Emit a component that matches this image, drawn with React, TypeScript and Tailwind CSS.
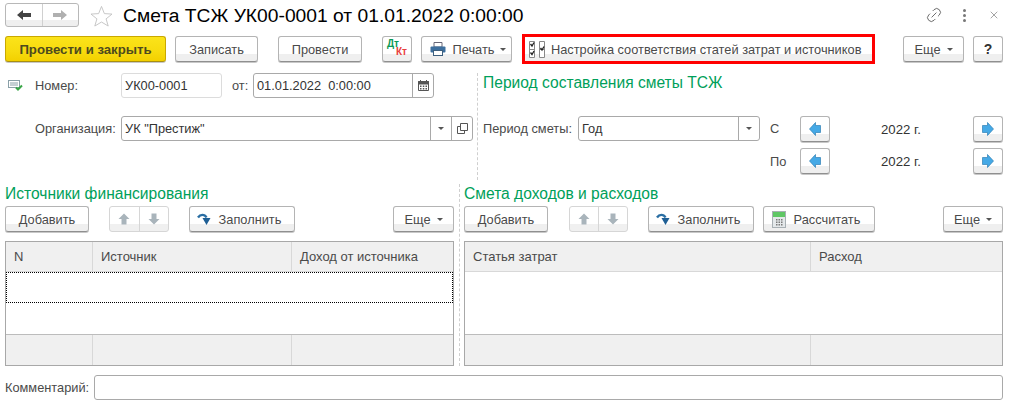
import type { ReactNode } from "react"
import { Link2, X } from "lucide-react"

function Btn({ className = "", children }: { className?: string; children?: ReactNode }) {
  return (
    <div className={`flex h-[26px] shrink-0 items-center justify-center rounded-[3px] border border-[#b4b4b4] border-b-[#8f8f8f] bg-[linear-gradient(#fff_0,#fff_17px,#efefef_17px)] shadow-[0_1px_0_#c8c8c8] ${className}`}>
      {children}
    </div>
  )
}

function T({ className = "", children }: { className?: string; children?: ReactNode }) {
  return <span className={`pt-[2px] ${className}`}>{children}</span>
}

function Caret() {
  return <span className="ml-[6px] mt-[1px] h-0 w-0 border-x-[3px] border-t-[3px] border-x-transparent border-t-[#555]" />
}

function ArrowV({ up, color = "#a9b4bb" }: { up?: boolean; color?: string }) {
  return (
    <svg width="12" height="12" viewBox="0 0 12 12" className={up ? "" : "rotate-180"}>
      <path d="M6 0.5 L11.5 6 H8.5 V11.5 H3.5 V6 H0.5 Z" fill={color} />
    </svg>
  )
}

function UpDown({ className = "" }: { className?: string }) {
  return (
    <div className={`flex h-[26px] shrink-0 rounded-[3px] border border-[#d6d6d6] bg-[linear-gradient(#fff_0,#fff_17px,#f0f0f0_17px)] ${className}`}>
      <div className="flex flex-1 items-center justify-center border-r border-[#d6d6d6] pb-[1px]"><ArrowV up /></div>
      <div className="flex flex-1 items-center justify-center pb-[1px]"><ArrowV /></div>
    </div>
  )
}

function FillIcon() {
  return (
    <svg width="14" height="13" viewBox="0 0 14 13" className="mr-[8px]">
      <path d="M1 4.5 C3.5 1 7.5 1 9.5 4.5" fill="none" stroke="#2a6ea3" strokeWidth="2.4" />
      <path d="M5.5 5 H13.5 L9.5 12 Z" fill="#1f5f95" />
    </svg>
  )
}

function CalcIcon() {
  return (
    <svg width="14" height="17" viewBox="0 0 14 17" className="mr-[8px]">
      <rect x="0.5" y="0.5" width="13" height="16" fill="#e4e8ea" stroke="#a8b0b4" />
      <rect x="1" y="1" width="12" height="5" fill="#5fc765" />
      <path d="M4 8h1.5v1.5H4zM6.5 8H8v1.5H6.5zM9 8h1.5v1.5H9zM4 10.5h1.5V12H4zM6.5 10.5H8V12H6.5zM9 10.5h1.5V12H9zM4 13h1.5v1.5H4zM6.5 13H8v1.5H6.5zM9 13h1.5v1.5H9z" fill="#7a7a7a" />
    </svg>
  )
}

function BlueArrow({ right }: { right?: boolean }) {
  return (
    <svg width="12" height="14" viewBox="0 0 12 14" className={right ? "" : "rotate-180"}>
      <path d="M0.5 3.5 H5.5 V0.5 L11.5 7 L5.5 13.5 V10.5 H0.5 Z" fill="#45a9e6" stroke="#2f7fb5" strokeWidth="0.7" />
    </svg>
  )
}

function Input({ className = "", children }: { className?: string; children?: ReactNode }) {
  return (
    <div className={`flex h-[25px] shrink-0 items-center rounded-[3px] border border-[#a9a9a9] bg-white text-[#333] ${className}`}>
      {children}
    </div>
  )
}

function InputCell({ children }: { children?: ReactNode }) {
  return <div className="flex h-full w-[21px] shrink-0 items-center justify-center border-l border-[#a9a9a9]">{children}</div>
}

function Heading({ children }: { children: ReactNode }) {
  return <div className="text-[15.6px] leading-[20px] text-[#00a05a]">{children}</div>
}

function Grid({ cols, focus }: { cols: { label: string; w: string }[]; focus?: boolean }) {
  return (
    <div className="mt-[9px] flex h-[125px] flex-col border border-[#a8a8a8]">
      <div className="flex h-[30px] shrink-0 border-b border-[#d8d8d8] bg-[#f0f0f0] text-[13px]">
        {cols.map((c) => (
          <div key={c.label} className={`flex items-center border-r border-[#d8d8d8] pl-[8px] last:border-r-0 ${c.w}`}>{c.label}</div>
        ))}
      </div>
      <div className="flex-1 bg-white">
        {focus && <div className="h-[31px] border border-dotted border-black" />}
      </div>
      <div className="flex h-[31px] shrink-0 border-t border-[#bcbcbc] bg-[#f0f0f0]">
        {cols.map((c) => (
          <div key={c.label} className={`border-r border-[#d8d8d8] last:border-r-0 ${c.w}`} />
        ))}
      </div>
    </div>
  )
}

export default function App() {
  return (
    <div className="flex h-[407px] w-[1014px] flex-col overflow-hidden bg-white font-['Liberation_Sans',Arial,sans-serif] text-[12.8px] leading-none text-[#4a4a4a]">
      {/* заголовок */}
      <div className="flex h-[34px] shrink-0 items-start pl-[5px] pt-[3px]">
        <div className="flex h-[24px] w-[74px] rounded-[3px] border border-[#b8b8b8] bg-[linear-gradient(#fff_0,#fff_16px,#efefef_16px)]">
          <div className="flex flex-1 items-center justify-center border-r border-[#d0d0d0]">
            <svg width="14" height="10" viewBox="0 0 14 10"><path d="M0 5 L6 0 V3 H14 V7 H6 V10 Z" fill="#444" /></svg>
          </div>
          <div className="flex flex-1 items-center justify-center">
            <svg width="14" height="10" viewBox="0 0 14 10"><path d="M14 5 L8 0 V3 H0 V7 H8 V10 Z" fill="#b0b0b0" /></svg>
          </div>
        </div>
        <svg width="23" height="22" viewBox="0 0 24 23" className="ml-[11px] mt-[2px]">
          <path d="M12 1.5 L15 9 L23 9.5 L16.8 14.5 L19 22 L12 17.8 L5 22 L7.2 14.5 L1 9.5 L9 9 Z" fill="#fff" stroke="#c4c4c4" />
        </svg>
        <div className="ml-[10px] mt-[3px] text-[19.25px] leading-[20px] text-black">Смета ТСЖ УК00-0001 от 01.01.2022 0:00:00</div>
        <div className="ml-auto flex items-center pr-[14px] pt-[3px]">
          <Link2 size={18} strokeWidth={1.2} className="-rotate-45 text-[#666]" />
          <div className="ml-[20px] flex flex-col gap-[2px]">
            <span className="h-[3px] w-[3px] rounded-full bg-[#777]" />
            <span className="h-[3px] w-[3px] rounded-full bg-[#777]" />
            <span className="h-[3px] w-[3px] rounded-full bg-[#777]" />
          </div>
          <X size={12} strokeWidth={1.2} className="ml-[22px] text-[#666]" />
        </div>
      </div>

      {/* панель команд */}
      <div className="flex h-[30px] shrink-0 items-center pl-[5px]">
        <div className="flex h-[26px] w-[161px] shrink-0 items-center justify-center rounded-[3px] border border-[#c9a800] border-b-[#a98f10] bg-[linear-gradient(#fbe31a_0,#f7db0e_60%,#f3d000_100%)] shadow-[0_1px_0_#c8c8c8]">
          <T className="text-[13.2px] font-bold text-[#4d4a1e]">Провести и закрыть</T>
        </div>
        <Btn className="ml-[9px] w-[83px]"><T>Записать</T></Btn>
        <Btn className="ml-[20px] w-[84px]"><T>Провести</T></Btn>
        <Btn className="ml-[20px] w-[30px]">
          <div className="flex w-[20px] flex-col pb-[2px] text-[10px] leading-[8px]">
            <span className="font-bold text-[#0a9a55]">Дт</span>
            <span className="self-end font-bold text-[#e8413c]">Кт</span>
          </div>
        </Btn>
        <Btn className="ml-[9px] w-[91px] pl-[3px]">
          <svg width="16" height="14" viewBox="0 0 16 14" className="mr-[7px]">
            <path d="M4 0.5 H12 V5 H4 Z" fill="#fff" stroke="#667" />
            <rect x="0.5" y="4.5" width="15" height="6" rx="1" fill="#3d6f9e" />
            <rect x="3.5" y="8.5" width="9" height="5" fill="#fff" stroke="#3d5f7e" />
          </svg>
          <T>Печать</T><Caret />
        </Btn>
        <div className="ml-[10px] flex h-[30px] w-[353px] shrink-0 items-center border-[3px] border-[#f00] bg-[linear-gradient(#fff_0,#fff_17px,#efefef_17px)] pl-[4px]">
          <svg width="16" height="17" viewBox="0 0 16 17" className="mr-[6px]">
            <path d="M0.5 0.5H5.5V16.5H0.5ZM0.5 8.5H5.5M10.5 0.5H15.5V16.5H10.5ZM10.5 8.5H15.5" fill="#fff" stroke="#888" />
            <path d="M1.5 3 L3 5 L5 1.5M1.5 11.5 L3 13.5 L5 10M11.5 7 L13 9 L15 5.5" fill="none" stroke="#222" strokeWidth="1.3" />
          </svg>
          <T>Настройка соответствия статей затрат и источников</T>
        </div>
        <Btn className="ml-[28px] w-[61px]"><T>Еще</T><Caret /></Btn>
        <Btn className="ml-[9px] w-[30px] text-[14px] font-bold text-[#333]">?</Btn>
      </div>

      {/* реквизиты */}
      <div className="mt-[9px] flex h-[107px] shrink-0">
        <div className="w-[478px] shrink-0 border-r border-dashed border-[#cfcfcf] pl-[8px] pr-[4px]">
          <div className="flex h-[25px] items-center">
            <svg width="15" height="11" viewBox="0 0 15 11" className="mr-[12px]">
              <rect x="0.5" y="0.5" width="11" height="7" fill="#fff" stroke="#8aa0a8" />
              <path d="M2 3H10M2 5H10" stroke="#8aa0a8" />
              <path d="M8 7.5 L10 9.5 L14 5.5" fill="none" stroke="#3aa648" strokeWidth="2" />
            </svg>
            <T className="w-[86px]">Номер:</T>
            <Input className="w-[101px] border-[#dcdcdc] pl-[3px]"><T>УК00-0001</T></Input>
            <T className="ml-[10px] w-[21px]">от:</T>
            <Input className="w-[181px] pl-[3px]">
              <T className="flex-1 whitespace-pre">01.01.2022  0:00:00</T>
              <InputCell>
                <svg width="11" height="11" viewBox="0 0 11 11"><path d="M0.5 1.5H10.5V10.5H0.5Z" fill="#fff" stroke="#555" /><path d="M0.5 1.5H10.5V4H0.5ZM2.5 0V2M8.5 0V2" fill="#555" stroke="#555" /><path d="M2 5.5h1.5V7H2zM4.8 5.5h1.5V7H4.8zM7.5 5.5H9V7H7.5zM2 8h1.5v1.5H2zM4.8 8h1.5v1.5H4.8zM7.5 8H9v1.5H7.5z" fill="#555" /></svg>
              </InputCell>
            </Input>
          </div>
          <div className="mt-[18px] flex h-[25px] items-center pl-[27px]">
            <T className="w-[86px]">Организация:</T>
            <Input className="w-[352px] pl-[3px]">
              <T className="flex-1">УК "Престиж"</T>
              <InputCell><span className="h-0 w-0 border-x-[3px] border-t-[3px] border-x-transparent border-t-[#555]" /></InputCell>
              <InputCell>
                <svg width="11" height="11" viewBox="0 0 11 11"><path d="M3.5 0.5H10.5V7.5H3.5Z M0.5 3.5H3.5 M0.5 3.5V10.5H7.5V7.5" fill="none" stroke="#555" /></svg>
              </InputCell>
            </Input>
          </div>
        </div>
        <div className="pl-[5px]">
          <Heading>Период составления сметы ТСЖ</Heading>
          <div className="mt-[23px] flex h-[25px] items-center">
            <T className="w-[95px]">Период сметы:</T>
            <Input className="w-[182px] pl-[3px]">
              <T className="flex-1">Год</T>
              <InputCell><span className="h-0 w-0 border-x-[3px] border-t-[3px] border-x-transparent border-t-[#555]" /></InputCell>
            </Input>
            <T className="ml-[10px] w-[30px]">С</T>
            <Btn className="w-[30px]"><BlueArrow /></Btn>
            <T className="ml-[51px] w-[92px] text-[13.2px] text-[#333]">2022 г.</T>
            <Btn className="w-[30px]"><BlueArrow right /></Btn>
          </div>
          <div className="mt-[7px] flex h-[26px] items-center pl-[287px]">
            <T className="w-[30px]">По</T>
            <Btn className="w-[30px]"><BlueArrow /></Btn>
            <T className="ml-[51px] w-[92px] text-[13.2px] text-[#333]">2022 г.</T>
            <Btn className="w-[30px]"><BlueArrow right /></Btn>
          </div>
        </div>
      </div>

      {/* таблицы */}
      <div className="mt-[4px] flex h-[182px] shrink-0">
        <div className="w-[460px] shrink-0 border-r border-dashed border-[#cfcfcf] pl-[5px] pr-[5px]">
          <div className="h-[22px]"><Heading>Источники финансирования</Heading></div>
          <div className="flex h-[26px]">
            <Btn className="w-[84px]"><T>Добавить</T></Btn>
            <UpDown className="ml-[20px] w-[60px]" />
            <Btn className="ml-[20px] w-[106px] pr-[6px]"><FillIcon /><T>Заполнить</T></Btn>
            <Btn className="ml-auto w-[61px]"><T>Еще</T><Caret /></Btn>
          </div>
          <Grid focus cols={[{ label: "N", w: "w-[87px]" }, { label: "Источник", w: "w-[199px]" }, { label: "Доход от источника", w: "flex-1" }]} />
        </div>
        <div className="w-[543px] shrink-0 pl-[4px]">
          <div className="h-[22px]"><Heading>Смета доходов и расходов</Heading></div>
          <div className="flex h-[26px]">
            <Btn className="w-[84px]"><T>Добавить</T></Btn>
            <UpDown className="ml-[21px] w-[59px]" />
            <Btn className="ml-[20px] w-[106px] pr-[6px]"><FillIcon /><T>Заполнить</T></Btn>
            <Btn className="ml-[9px] w-[112px] pr-[6px]"><CalcIcon /><T>Рассчитать</T></Btn>
            <Btn className="ml-auto w-[60px]"><T>Еще</T><Caret /></Btn>
          </div>
          <Grid cols={[{ label: "Статья затрат", w: "w-[346px]" }, { label: "Расход", w: "flex-1" }]} />
        </div>
      </div>

      {/* комментарий */}
      <div className="mt-[9px] flex h-[25px] shrink-0 items-center pl-[5px]">
        <T className="w-[89px]">Комментарий:</T>
        <Input className="w-[909px]" />
      </div>
    </div>
  )
}
